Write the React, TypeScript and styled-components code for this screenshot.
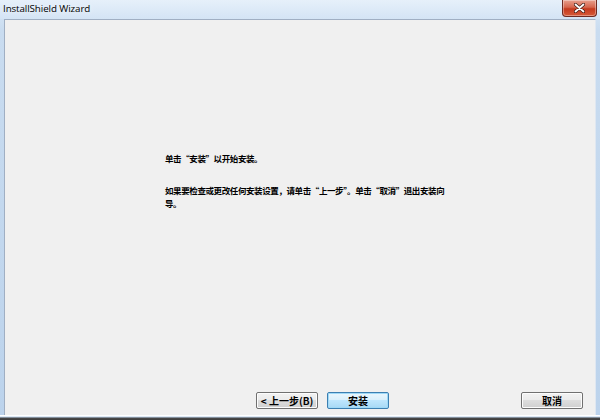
import React from "react";
import styled, { createGlobalStyle } from "styled-components";

const Global = createGlobalStyle`
  html, body { margin: 0; padding: 0; }
  body { width: 600px; height: 420px; overflow: hidden; font-family: "Noto Sans CJK SC", sans-serif; }
`;

const Window = styled.div`
  width: 600px;
  height: 420px;
  display: flex;
  flex-direction: column;
  background: linear-gradient(180deg, #dbe9f7 0px, #c9dcf0 30px, #bcd3ec 420px);
  box-sizing: border-box;
`;

const TitleBar = styled.div`
  height: 19px;
  flex: 0 0 19px;
  display: flex;
  align-items: flex-start;
  justify-content: space-between;
  padding-left: 3px;
  padding-right: 3px;
  background: linear-gradient(180deg, #e6f0fa 0%, #d4e4f5 100%);
`;

const Title = styled.span`
  font-family: "Open Sans", "Noto Sans", sans-serif;
  font-size: 9.8px;
  color: #000;
  line-height: 17px;
  letter-spacing: -0.1px;
  text-shadow: 0 0 6px rgba(255,255,255,0.9);
`;

const CloseButton = styled.div`
  width: 35px;
  height: 17px;
  border: 1px solid #6d2a22;
  border-top: none;
  border-radius: 0 0 4px 4px;
  box-sizing: border-box;
  background: linear-gradient(180deg, #e8a08e 0%, #d6664e 45%, #c43a1f 55%, #d65a38 100%);
  display: flex;
  align-items: center;
  justify-content: center;
  box-shadow: inset 0 0 0 1px rgba(255,255,255,0.35);
`;

const Body = styled.div`
  flex: 1;
  margin: 0 4px 0 4px;
  border-top: 1px solid #a0afc3;
  border-left: 1px solid #a0afc3;
  border-right: 1px solid #dfe7f1;
  background: #f0f0f0;
  display: flex;
  flex-direction: column;
`;

const Content = styled.div`
  flex: 1;
  padding: 132px 0 0 160px;
  box-sizing: border-box;
`;

const Para = styled.p`
  margin: 0 0 19px 0;
  font-size: 8.5px;
  line-height: 13px;
  letter-spacing: -0.4px;
  font-weight: 700;
  font-feature-settings: "fwid";
  color: #000;
  width: 285px;
  word-break: break-all;
`;

const ButtonRow = styled.div`
  display: flex;
  align-items: center;
  padding: 0 12px 6px 251px;
  gap: 9px;
`;

const Spacer = styled.div`
  flex: 1;
`;

const Button = styled.button<{ $default?: boolean }>`
  width: 62px;
  height: 17px;
  padding: 0;
  box-sizing: border-box;
  font-family: "Noto Sans CJK SC", sans-serif;
  font-size: 10px;
  font-weight: 700;
  line-height: 13px;
  color: #000;
  border-radius: 2px;
  border: 1px solid ${(p) => (p.$default ? "#3c7fb1" : "#707070")};
  background: ${(p) =>
    p.$default
      ? "linear-gradient(180deg, #eaf6fd 0%, #d9f0fc 45%, #bee6fd 50%, #a7d9f5 100%)"
      : "linear-gradient(180deg, #f2f2f2 0%, #ebebeb 45%, #dddddd 50%, #cfcfcf 100%)"};
  box-shadow: inset 0 0 0 1px ${(p) => (p.$default ? "#9fd9f7" : "#fcfcfc")};
  display: flex;
  align-items: center;
  justify-content: center;
`;

const BottomFrame = styled.div`
  height: 5px;
  flex: 0 0 5px;
  background: linear-gradient(180deg, #ffffff 0px, #ffffff 1px, #bcd3ec 2px, #4a4a4a 3px, #3a3a3a 5px);
`;

export default function App() {
  return (
    <>
      <Global />
      <Window>
        <TitleBar>
          <Title>InstallShield Wizard</Title>
          <CloseButton>
            <svg width="11" height="10" viewBox="0 0 11 10">
              <path d="M1.5 1.5 L9.5 8.5 M9.5 1.5 L1.5 8.5" stroke="#3a1a14" strokeWidth="3.2" strokeLinecap="round" />
              <path d="M1.5 1.5 L9.5 8.5 M9.5 1.5 L1.5 8.5" stroke="#ffffff" strokeWidth="1.8" strokeLinecap="round" />
            </svg>
          </CloseButton>
        </TitleBar>
        <Body>
          <Content>
            <Para>单击“安装”以开始安装。</Para>
            <Para>如果要检查或更改任何安装设置，请单击“上一步”。单击“取消”退出安装向导。</Para>
          </Content>
          <ButtonRow>
            <Button>&lt; 上一步(B)</Button>
            <Button $default>安装</Button>
            <Spacer />
            <Button>取消</Button>
          </ButtonRow>
        </Body>
        <BottomFrame />
      </Window>
    </>
  );
}
